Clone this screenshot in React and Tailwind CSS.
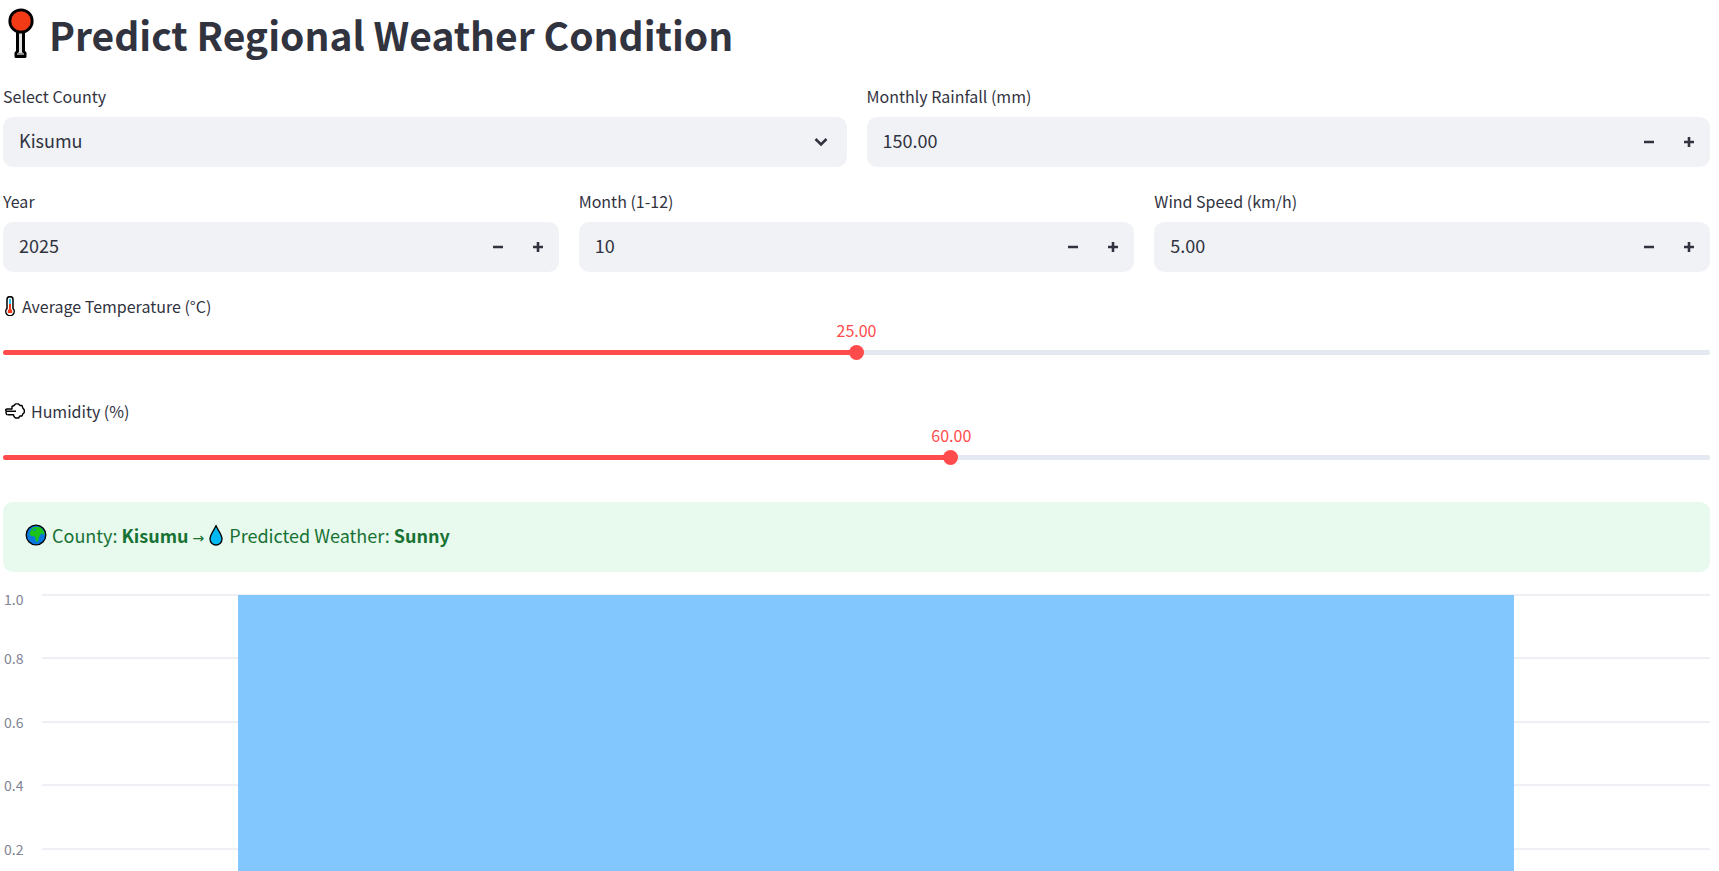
import { useId, useState } from "react";

function Pin() {
  return (
    <svg viewBox="0 0 26 51" className="h-[51px] w-[26px] shrink-0" aria-hidden="true">
      <path d="M9.500 22h6v21.500l1.500 1.500v3.500h-9v-3.500l1.500-1.500z" fill="#e2e2e2" stroke="#000" strokeWidth="3" strokeLinejoin="round" />
      <path d="M9 45h7v2h-7z" fill="#8b8b8b" />
      <circle cx="13" cy="13" r="11.200" fill="#f23a17" stroke="#000" strokeWidth="2.800" />
    </svg>
  );
}

function Thermometer() {
  return (
    <svg viewBox="0 0 11 20" className="h-5 w-[11px] shrink-0" aria-hidden="true">
      <path d="M2 3.500a3 2.800 0 0 1 6 0v9a4.200 4.200 0 1 1-6 0z" fill="#fff" stroke="#000" strokeWidth="1.500" />
      <path d="M4 3h2v5h-2z" fill="#27c4f5" />
      <path d="M4 8h2v5l1.200 1.500v2.500h-4.400v-2.500l1.200-1.500z" fill="#f23a17" />
    </svg>
  );
}

function Wind() {
  return (
    <svg viewBox="0 0 20 16" className="h-4 w-5 shrink-0" aria-hidden="true">
      <path d="M2 6h5V3.500L9 2.500 10.500.900h3L15 2.500h2l.800 2.500 1.500 2v2.500l-1.500 1.500-.800 2h-2l-1.500 2h-3L9 13.500l-.500-1.800H3M2 6C.300 6 .300 8.300 2 8.300h9M2 8.300c-1.500.200-1.300 3.400.800 3.400" fill="none" stroke="#000" strokeWidth="1.400" strokeLinejoin="round" />
    </svg>
  );
}

function Globe() {
  return (
    <svg viewBox="0 0 22 22" className="h-[22px] w-[22px] shrink-0" aria-hidden="true">
      <circle cx="11" cy="11" r="9.800" fill="#0878dc" stroke="#000" strokeWidth="1.300" />
      <path d="M5 8 7 4.500 9 3h5l3 1.500 2.500 4-.5 2.500-2-1.500-1.500.500-.500 2-1.500 1.500v3l-1.500 1h-1l-.5-2-.5-3-4-.500L4.500 10z" fill="#1cc41a" />
      <path d="m8 6 2-1.500 1 1-1.500 1.500z" fill="#0878dc" />
    </svg>
  );
}

function Drop() {
  return (
    <svg viewBox="0 0 14 22" className="h-[22px] w-[14px] shrink-0" aria-hidden="true">
      <path d="M7 1.500C5.500 6 1 10.500 1 15a6 6 0 0 0 12 0C13 10.500 8.500 6 7 1.500z" fill="#00b9f2" stroke="#000" strokeWidth="1.300" strokeLinejoin="round" />
    </svg>
  );
}

function Minus() {
  return (
    <svg viewBox="0 0 10 10" className="h-[10px] w-[10px]" aria-hidden="true">
      <path d="M0 5h10" stroke="currentColor" strokeWidth="2.600" />
    </svg>
  );
}

function Plus() {
  return (
    <svg viewBox="0 0 10 10" className="h-[10px] w-[10px]" aria-hidden="true">
      <path d="M0 5h10M5 0v10" stroke="currentColor" strokeWidth="2.600" />
    </svg>
  );
}

function Chevron() {
  return (
    <svg viewBox="0 0 14 10" className="pointer-events-none col-start-1 row-start-1 mr-[19px] h-[10px] w-[14px] self-center justify-self-end" aria-hidden="true">
      <path d="M1.500 2 7 7.500 12.500 2" fill="none" stroke="currentColor" strokeWidth="2.600" />
    </svg>
  );
}

function NumberField({ label, initial, step, decimals }) {
  const id = useId();
  const [value, setValue] = useState(initial);
  const shift = (by) => setValue((Number(value) + by).toFixed(decimals));
  return (
    <div className="min-w-0">
      <label htmlFor={id} className="block h-[31px] text-base leading-5">{label}</label>
      <div className="flex h-[50px] overflow-hidden rounded-[10px] bg-[#f0f2f6] pr-px">
        <input
          id={id}
          inputMode="decimal"
          value={value}
          onChange={(e) => setValue(e.target.value)}
          className="min-w-0 flex-1 bg-transparent px-4 pb-1 text-lg outline-none"
        />
        <button type="button" aria-label={`Decrease ${label}`} onClick={() => shift(-step)} className="flex w-10 items-center justify-center">
          <Minus />
        </button>
        <button type="button" aria-label={`Increase ${label}`} onClick={() => shift(step)} className="flex w-10 items-center justify-center">
          <Plus />
        </button>
      </div>
    </div>
  );
}

function SliderField({ icon, label, min, max, initial }) {
  const id = useId();
  const [value, setValue] = useState(initial);
  const percent = ((value - min) / (max - min)) * 100;
  return (
    <div className="h-[85px]">
      <label htmlFor={id} className="flex h-[22px] items-center gap-[6px] pl-[2px] text-base leading-5">
        {icon}
        {label}
      </label>
      <div className="relative mt-[3px] h-5 text-base leading-5 text-[#ff4b4b]">
        <output htmlFor={id} className="absolute -translate-x-1/2" style={{ left: `${percent}%` }}>
          {value.toFixed(2)}
        </output>
      </div>
      <input
        id={id}
        type="range"
        min={min}
        max={max}
        step="0.01"
        value={value}
        onChange={(e) => setValue(Number(e.target.value))}
        className="mt-[10px] block h-[5px] w-full appearance-none rounded-full outline-none [&::-webkit-slider-thumb]:h-[15px] [&::-webkit-slider-thumb]:w-[15px] [&::-webkit-slider-thumb]:appearance-none [&::-webkit-slider-thumb]:rounded-full [&::-webkit-slider-thumb]:bg-[#ff4b4b]"
        style={{ background: `linear-gradient(to right, #ff4b4b ${percent}%, #e4e8f0 ${percent}%)` }}
      />
    </div>
  );
}

const ticks = ["1.0", "0.8", "0.6", "0.4", "0.2"];

function Chart() {
  return (
    <section aria-label="Prediction chart" className="mt-4 grid h-[323px] shrink-0 grid-cols-[39px_1fr]">
      <div className="mb-[6px] grid grid-rows-5 text-sm leading-[14px] text-[#808495]">
        {ticks.map((t) => (
          <span key={t} className="pl-px first:pt-1">{t}</span>
        ))}
      </div>
      <div className="grid pt-[6px]">
        <div className="col-start-1 row-start-1 grid grid-rows-5">
          {ticks.map((t) => (
            <div key={t} className="border-t-2 border-[#eef0f5]" />
          ))}
        </div>
        <div className="z-10 col-start-1 row-start-1 mx-[11.75%] mt-px bg-[#83c7ff]" />
      </div>
    </section>
  );
}

export default function App() {
  return (
    <main className="flex h-screen flex-col overflow-hidden bg-white pr-[9px] pl-[3px] font-['Noto_Sans_CJK_SC',sans-serif] text-[#31333f]">
      <h1 className="flex h-[71px] shrink-0 items-center gap-[15px] pb-1 pl-[5px] text-[39px] leading-[48px] font-bold">
        <Pin />
        Predict Regional Weather Condition
      </h1>

      <div className="mt-[15px] grid shrink-0 grid-cols-2 gap-5">
        <div className="min-w-0">
          <label htmlFor="county" className="block h-[31px] text-base leading-5">Select County</label>
          <div className="grid">
            <select id="county" defaultValue="Kisumu" className="col-start-1 row-start-1 h-[50px] w-full appearance-none rounded-[10px] bg-[#f0f2f6] px-4 pb-1 text-lg outline-none">
              <option>Kisumu</option>
            </select>
            <Chevron />
          </div>
        </div>
        <NumberField label="Monthly Rainfall (mm)" initial="150.00" step={1} decimals={2} />
      </div>

      <div className="mt-6 grid shrink-0 grid-cols-3 gap-5">
        <NumberField label="Year" initial="2025" step={1} decimals={0} />
        <NumberField label="Month (1-12)" initial="10" step={1} decimals={0} />
        <NumberField label="Wind Speed (km/h)" initial="5.00" step={1} decimals={2} />
      </div>

      <div className="mt-[23px] flex shrink-0 flex-col gap-5">
        <SliderField icon={<Thermometer />} label="Average Temperature (°C)" min={0} max={50} initial={25} />
        <SliderField icon={<Wind />} label="Humidity (%)" min={10} max={100} initial={60} />
      </div>

      <div role="status" className="mt-[17px] flex h-[70px] shrink-0 items-center rounded-[10px] bg-[#e8f9ee] px-[22px] pb-1 text-lg text-[#177233]">
        <Globe />
        <p className="mx-[5px]">
          County: <strong className="font-bold">Kisumu</strong> <span className="font-['DejaVu_Sans',sans-serif] text-sm leading-none">→</span>
        </p>
        <Drop />
        <p className="ml-[6px]">
          Predicted Weather: <strong className="font-bold">Sunny</strong>
        </p>
      </div>

      <Chart />
    </main>
  );
}
